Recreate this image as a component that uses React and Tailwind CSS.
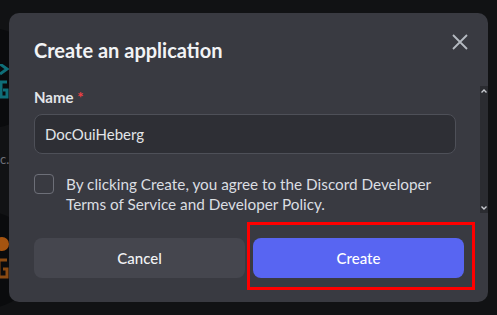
import React from 'react';

const font = { fontFamily: 'Lato, "Noto Sans", sans-serif' };

const Backdrop = () => (
  <>
    <div className="absolute left-[-60px] top-[28px] h-[100px] w-[100px] rounded-full bg-[#0a0b0d]">
      <svg className="absolute left-[60px] top-[36px]" width="10" height="40" viewBox="0 0 10 40">
        <path d="M0 0 L7 5 L0 10" stroke="#0f6e78" strokeWidth="3" fill="none" />
        <path d="M7 18 L1 18 L1 33 L7 33 L7 26 L3 26" stroke="#0f6e78" strokeWidth="3" fill="none" />
      </svg>
    </div>
    <div className="absolute left-[0px] top-[150px] text-[13px] text-[#6d6f78]">c.</div>
    <div className="absolute left-[-60px] top-[212px] h-[96px] w-[96px] rounded-full bg-[#0a0b0d]">
      <svg className="absolute left-[58px] top-[20px]" width="12" height="50" viewBox="0 0 12 50">
        <circle cx="4" cy="12" r="7" fill="#a55410" />
        <path d="M9 28 L1 28 L1 45 L9 45 L9 37 L5 37" stroke="#8a4a12" strokeWidth="3" fill="none" />
      </svg>
    </div>
  </>
);

const Scrollbar = () => (
  <div className="absolute right-0 top-[73px] flex h-[127px] w-[8px] flex-col items-center justify-between bg-[#2b2c31] py-[3px]">
    <svg width="6" height="4" viewBox="0 0 6 4">
      <path d="M0.5 3.5 L3 1 L5.5 3.5" stroke="#c8cad0" strokeWidth="1.4" fill="none" />
    </svg>
    <svg width="6" height="4" viewBox="0 0 6 4">
      <path d="M0.5 0.5 L3 3 L5.5 0.5" stroke="#c8cad0" strokeWidth="1.4" fill="none" />
    </svg>
  </div>
);

export default function App() {
  return (
    <div className="relative h-[315px] w-[497px] overflow-hidden bg-[#111214] pl-[9px] pt-[13px]" style={font}>
      <Backdrop />
      <div className="relative flex h-[289px] w-[479px] flex-col rounded-[10px] bg-[#393a41]">
        <button className="absolute right-[16px] top-[17px] flex h-[24px] w-[24px] items-center justify-center text-[#b5bac1]">
          <svg width="18" height="18" viewBox="0 0 18 18">
            <path d="M2 2 L16 16 M16 2 L2 16" stroke="currentColor" strokeWidth="1.8" />
          </svg>
        </button>
        <Scrollbar />

        <div className="pl-[25px] pr-[32px] pt-[24px]">
          <h1 className="text-[20px] font-bold leading-[26px] text-[#f2f3f5]">Create an application</h1>

          <label className="mt-[24px] block text-[15px] font-bold leading-[20px] text-[#e3e5e8]">
            Name <span className="text-[#f23f43]">*</span>
          </label>
          <div className="mt-[7px] flex h-[40px] items-center rounded-[8px] border border-[#4e5058] bg-[#2e2f35] px-[10px] text-[15px] text-[#e3e5e8]">
            DocOuiHeberg
          </div>

          <div className="mt-[20px] flex gap-3">
            <div className="h-[20px] w-[20px] shrink-0 rounded-[4px] border border-[#6d6f78]" />
            <p className="text-[15.3px] leading-[20px] text-[#dbdee1]">
              By clicking Create, you agree to the Discord Developer Terms of Service and Developer Policy.
            </p>
          </div>
        </div>

        <div className="mt-auto flex gap-[8px] pb-[24px] pl-[25px] pr-[24px]">
          <button className="h-[40px] flex-1 rounded-[8px] bg-[#45464e] text-[15px] font-medium text-[#f2f3f5]">
            Cancel
          </button>
          <button className="h-[40px] flex-1 rounded-[8px] bg-[#5865f2] text-[15px] font-medium text-white">
            Create
          </button>
        </div>

        <div className="pointer-events-none absolute left-[238px] top-[209px] h-[68px] w-[228px] border-[3px] border-[#ff0000]" />
      </div>
    </div>
  );
}
